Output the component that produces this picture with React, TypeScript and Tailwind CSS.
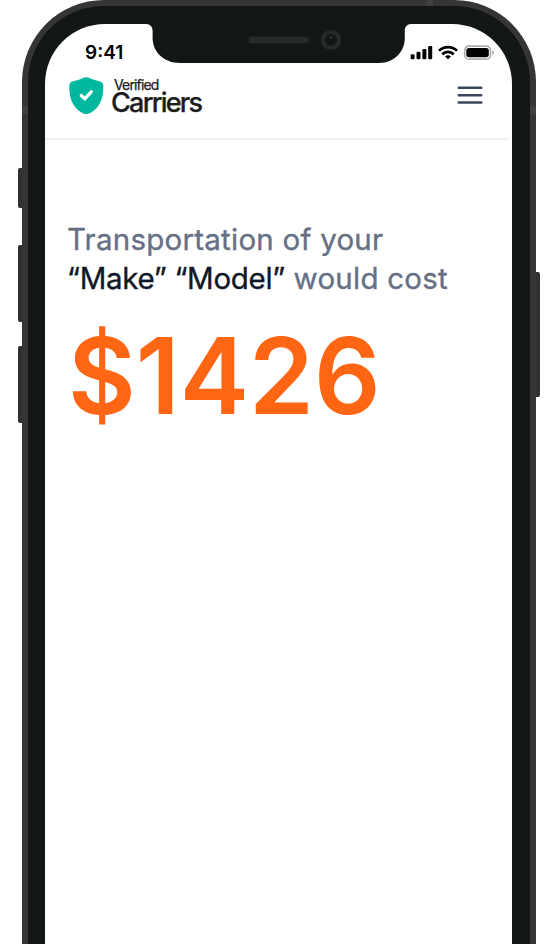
function Notch() {
  return (
    <svg className="absolute left-[101px] top-0 h-10 w-[265px]" viewBox="0 0 265 40" fill="none">
      <path
        d="M0 0H265C261 .2 258.800 2.800 258.800 7V14C258.800 28 248 39 233 39H34C18 39 6.600 28 6.600 14V7C6.600 2.800 4.400 .2 0 0Z"
        fill="#121616"
      />
      <rect x="102.500" y="12.500" width="60" height="7" rx="3.500" fill="#262a2b" />
      <circle cx="185" cy="16" r="8.100" stroke="#262a2b" strokeWidth="4" />
      <circle cx="185" cy="13.500" r="1.300" fill="#35393a" />
    </svg>
  );
}

function StatusIcons() {
  return (
    <svg className="h-4 w-[84px]" viewBox="0 0 84 16" aria-label="Signal, Wi-Fi, battery">
      <rect x="0.600" y="9.200" width="4" height="5" rx="1.200" />
      <rect x="6.500" y="6.800" width="4" height="7.400" rx="1.200" />
      <rect x="12.400" y="4" width="4" height="10.200" rx="1.200" />
      <rect x="18.200" y="1.100" width="4" height="13.100" rx="1.200" />
      <g fill="none" stroke="#000" strokeWidth="2.700">
        <path d="M29 5.700C34.200 .8 41.800 .8 47 5.700" />
        <path d="M32.200 9.200C35.600 6.100 40.400 6.100 43.800 9.200" />
      </g>
      <path d="M35 11.400Q38 9.100 41 11.400L38 14.300Z" />
      <rect x="54.700" y="1.100" width="25.800" height="13" rx="4.200" fill="none" stroke="#adadad" strokeWidth="1.700" />
      <rect x="56.300" y="2.900" width="22.500" height="9.400" rx="2.800" />
      <path d="M82.200 5.400V9.900Q84 9.400 84 7.600T82.200 5.400Z" fill="#adadad" />
    </svg>
  );
}

function Logo() {
  return (
    <div className="flex items-start">
      <svg className="mt-px h-[38px] w-[35px]" viewBox="0 0 35 38" fill="none">
        <path
          d="M14.500 .8Q17.300 -.4 20.100 .8C23.500 2.500 27.500 3.800 31.200 4.500Q34 5.200 34.200 8C34.800 19 32 30 21.300 36.100Q17.300 38.300 13.300 36.100C2.600 30 -.2 19 .4 8Q.6 5.200 3.400 4.500C7.100 3.800 11.100 2.500 14.500 .8Z"
          fill="#00b8a0"
        />
        <path d="M12.300 18.500L15.800 21.900L22.400 14.700" stroke="#fff" strokeWidth="3.200" strokeLinecap="round" strokeLinejoin="round" />
      </svg>
      <div className="ml-[7px] whitespace-nowrap text-[#1c1c1c] [-webkit-text-stroke:0.25px_#1c1c1c]">
        <div className="ml-[3px] text-[14px] font-normal leading-[17px] tracking-[-0.850px]">Verified</div>
        <div className="text-[27px] font-medium leading-[20px] tracking-[-1.750px]">Carriers</div>
      </div>
    </div>
  );
}

export default function App() {
  return (
    <div className="flex h-[944px] w-[554px] overflow-hidden bg-white pl-[18px] font-['Inter',sans-serif]">
      <div className="flex w-1 shrink-0 flex-col pt-[168px]">
        <div className="h-10 rounded-l-[2px] bg-[#303030]" />
        <div className="mt-[37px] h-[77px] rounded-l-[2px] bg-[#303030]" />
        <div className="mt-[24px] h-[77px] rounded-l-[2px] bg-[#303030]" />
      </div>
      <div className="relative h-[1040px] w-[513.500px] shrink-0 rounded-[82px] bg-[#353535] p-1.5">
        <div className="absolute left-0 top-[106px] h-2 w-1.5 bg-[#404040]" />
        <div className="absolute right-0 top-[106px] h-2 w-1.5 bg-[#404040]" />
        <div className="absolute left-[404px] top-0 h-1.5 w-[7px] bg-[#404040]" />
        <div className="h-full rounded-[76px] bg-[#121616] px-[17px] pt-[17.500px]">
          <div className="relative h-[1000px] w-[467px] rounded-[60px] bg-white">
            <Notch />
            <div className="flex h-[52px] items-start justify-between pl-10 pr-[18px] pt-[19px]">
              <div className="text-[19px] font-semibold leading-5 text-black">9:41</div>
              <div className="pt-0.5">
                <StatusIcons />
              </div>
            </div>
            <header className="mr-[3px] flex h-[64px] justify-between border-b-2 border-[#f2f2f2] pl-6 pr-[26px]">
              <Logo />
              <svg className="mt-[9px] h-5 w-[26px]" viewBox="0 0 26 20" stroke="#3b475c" strokeWidth="2.400" strokeLinecap="round">
                <path d="M1.700 2.800H24.300M1.700 10.200H24.300M1.700 17.500H24.300" />
              </svg>
            </header>
            <main className="whitespace-nowrap pl-[22px] pt-[80px]">
              <p className="text-[29.500px] font-normal leading-[39.300px] tracking-[0.240px] text-[#667085] [-webkit-text-stroke:0.350px_currentColor]">
                Transportation of your
                <br />
                <span className="tracking-[-0.300px] text-[#101828]">“Make” “Model”</span> would cost
              </p>
              <div className="ml-px mt-[14px] origin-left scale-x-[0.982] text-[106px] font-semibold leading-[128px] text-[#ff6613]">
                $1426
              </div>
            </main>
          </div>
        </div>
      </div>
      <div className="w-1 shrink-0 pt-[272px]">
        <div className="h-[125px] rounded-r-[2px] bg-[#303030]" />
      </div>
    </div>
  );
}
